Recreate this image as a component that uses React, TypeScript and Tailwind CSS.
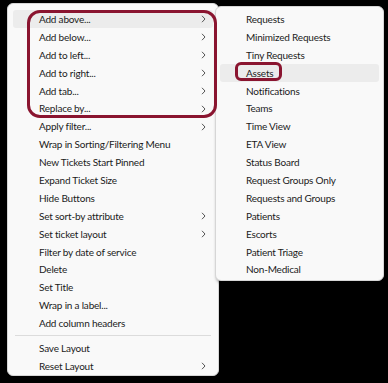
import { ReactNode } from 'react'

type Item = { label: string; sub?: boolean; active?: boolean }

const mainItems: Item[] = [
  { label: 'Add above...', sub: true, active: true },
  { label: 'Add below...', sub: true },
  { label: 'Add to left...', sub: true },
  { label: 'Add to right...', sub: true },
  { label: 'Add tab...', sub: true },
  { label: 'Replace by...', sub: true },
  { label: 'Apply filter...', sub: true },
  { label: 'Wrap in Sorting/Filtering Menu' },
  { label: 'New Tickets Start Pinned' },
  { label: 'Expand Ticket Size' },
  { label: 'Hide Buttons' },
  { label: 'Set sort-by attribute', sub: true },
  { label: 'Set ticket layout', sub: true },
  { label: 'Filter by date of service' },
  { label: 'Delete' },
  { label: 'Set Title' },
  { label: 'Wrap in a label...' },
  { label: 'Add column headers' },
]

const layoutItems: Item[] = [
  { label: 'Save Layout' },
  { label: 'Reset Layout', sub: true },
]

const subItems = [
  'Requests',
  'Minimized Requests',
  'Tiny Requests',
  'Assets',
  'Notifications',
  'Teams',
  'Time View',
  'ETA View',
  'Status Board',
  'Request Groups Only',
  'Requests and Groups',
  'Patients',
  'Escorts',
  'Patient Triage',
  'Non-Medical',
]

function Chevron() {
  return (
    <svg className="w-[5px] h-[8px] text-[#555]" viewBox="0 0 5 8" fill="none" stroke="currentColor">
      <path d="M1 0.8 L4 4 L1 7.2" strokeWidth={1} />
    </svg>
  )
}

function Row({ item }: { item: Item }) {
  return (
    <div
      className={`h-[17.9px] mx-[5px] pl-[26px] pr-[7px] pt-px flex items-center justify-between rounded-[3px] ${
        item.active ? 'bg-[#ececec]' : ''
      }`}
    >
      <span>{item.label}</span>
      {item.sub && <Chevron />}
    </div>
  )
}

function Menu({ children, className }: { children: ReactNode; className: string }) {
  return (
    <div
      className={`bg-[#f9f9f9] border border-[#d6d6d6] rounded-[6px] shadow-[1px_2px_3px_rgba(0,0,0,0.35)] text-[10px] tracking-[-0.2px] text-[#1b1b1b] ${className}`}
    >
      {children}
    </div>
  )
}

export default function App() {
  return (
    <div
      className="relative w-[388px] h-[383px] bg-black pt-[3px] pl-[7px] overflow-hidden"
      style={{ fontFamily: 'Lato, "Noto Sans", sans-serif' }}
    >
      <Menu className="w-[212px] h-[373px] pt-[6px]">
        {mainItems.map((it) => (
          <Row key={it.label} item={it} />
        ))}
        <div className="h-[7px] flex items-center px-[7px]">
          <div className="h-px w-full bg-[#dcdcdc]" />
        </div>
        {layoutItems.map((it) => (
          <Row key={it.label} item={it} />
        ))}
      </Menu>

      <Menu className="absolute left-[215px] top-[6px] w-[169px] h-[275px] pt-[3px]">
        {subItems.map((s) => (
          <div
            key={s}
            className={`h-[17.9px] mx-[4px] pl-[26px] pt-px flex items-center rounded-[3px] ${
              s === 'Assets' ? 'bg-[#ececec]' : ''
            }`}
          >
            {s}
          </div>
        ))}
      </Menu>

      {/* annotation outlines */}
      <div className="absolute left-[27px] top-[10px] w-[190px] h-[108px] border-[3px] border-[#8a1530] rounded-[13px]" />
      <div className="absolute left-[235px] top-[62px] w-[47px] h-[19px] border-[3px] border-[#8a1530] rounded-[6px]" />
    </div>
  )
}
